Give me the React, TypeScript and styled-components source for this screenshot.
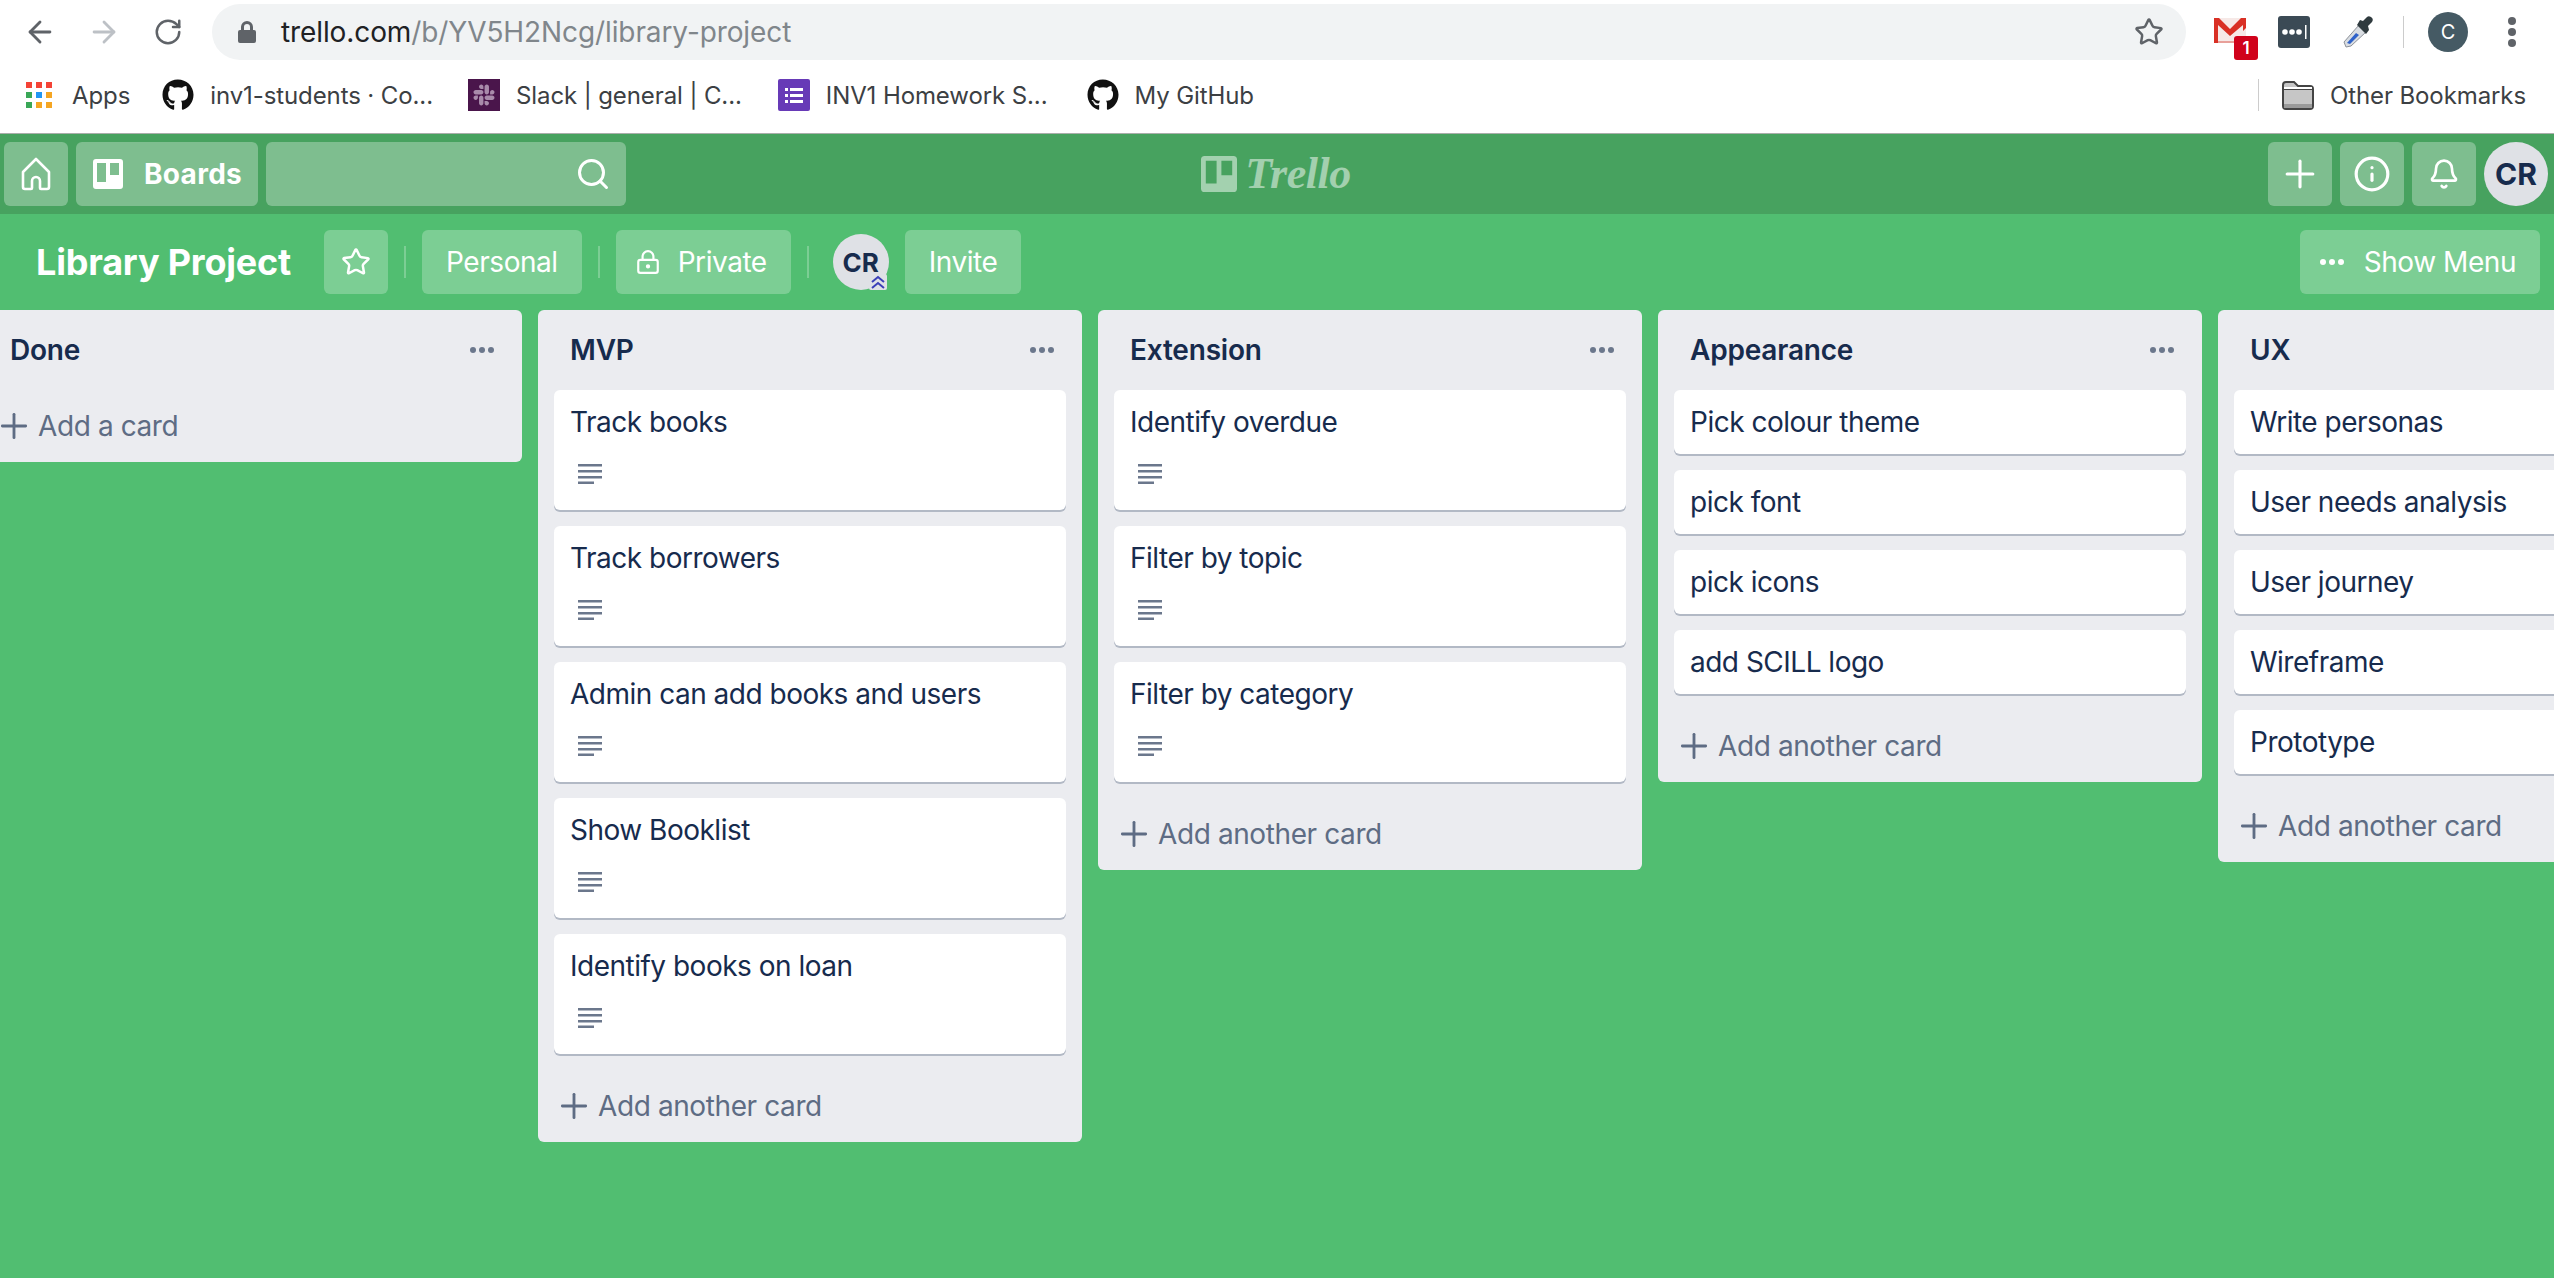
import React from 'react'
import styled, { createGlobalStyle } from 'styled-components'
import { ArrowLeft, ArrowRight, RotateCw, Star, Search, Plus, Info, Bell, LockKeyhole } from 'lucide-react'
import { FaGithub, FaSlack } from 'react-icons/fa'

const GlobalStyle = createGlobalStyle`
    html, body {
        margin: 0;
        padding: 0;
        background: #fff;
    }
    * {
        box-sizing: border-box;
    }
`

const Page = styled.div`
    width: 2554px;
    height: 1278px;
    overflow: hidden;
    display: flex;
    flex-direction: column;
    font-family: Inter, "Liberation Sans", sans-serif;
`

/* browser chrome */
const Toolbar = styled.div`
    height: 66px;
    padding: 4px 0 6px 8px;
    display: flex;
    align-items: center;
    background: #fff;
`
const NavButton = styled.div<{ $faded?: boolean }>`
    width: 64px;
    height: 56px;
    display: flex;
    align-items: center;
    justify-content: center;
    color: ${p => (p.$faded ? '#bdc1c6' : '#5f6368')};
`
const AddressBar = styled.div`
    width: 1974px;
    height: 56px;
    margin-left: 12px;
    padding: 0 22px 0 26px;
    border-radius: 28px;
    background: #f1f3f4;
    display: flex;
    align-items: center;
    color: #5f6368;
`
const Url = styled.div`
    flex: 1;
    margin-left: 25px;
    font-size: 28px;
    letter-spacing: -0.1px;
    color: #80868b;
    span {
        color: #202124;
    }
`
const ExtItem = styled.div<{ $ml: number; $w: number }>`
    position: relative;
    margin-left: ${p => p.$ml}px;
    width: ${p => p.$w}px;
    height: 44px;
    flex-shrink: 0;
    display: flex;
    align-items: center;
    justify-content: center;
`
const GmailBadge = styled.span`
    position: absolute;
    right: 0;
    bottom: -6px;
    width: 24px;
    height: 24px;
    border-radius: 3px;
    background: #d0021b;
    color: #fff;
    font-size: 17px;
    font-weight: 600;
    display: flex;
    align-items: center;
    justify-content: center;
`
const ExtDivider = styled.div`
    margin-left: 28px;
    width: 1px;
    height: 32px;
    background: #ccc;
`
const ProfileCircle = styled.div`
    margin-left: 24px;
    width: 40px;
    height: 40px;
    border-radius: 50%;
    background: #455a64;
    color: #fff;
    font-size: 20px;
    display: flex;
    align-items: center;
    justify-content: center;
`
const KebabDots = styled.div`
    margin-left: 40px;
    width: 8px;
    display: flex;
    flex-direction: column;
    gap: 3px;
    i {
        width: 8px;
        height: 8px;
        border-radius: 50%;
        background: #5f6368;
    }
`

const BookmarksBar = styled.div`
    height: 68px;
    padding: 0 28px 9px 26px;
    display: flex;
    align-items: center;
    background: #fff;
    border-bottom: 1px solid #a9aeaa;
    color: #3c4043;
    font-size: 24px;
    letter-spacing: -0.1px;
`
const Bookmark = styled.div<{ $ml?: number; $gap?: number }>`
    display: flex;
    align-items: center;
    margin-left: ${p => p.$ml ?? 0}px;
    gap: ${p => p.$gap ?? 16}px;
    white-space: nowrap;
`
const BookmarksEnd = styled.div`
    margin-left: auto;
    padding-left: 23px;
    height: 32px;
    border-left: 1px solid #ccc;
    display: flex;
    align-items: center;
    gap: 16px;
`
const SlackSquare = styled.div`
    width: 32px;
    height: 32px;
    background: #4a154b;
    color: #a98bab;
    display: flex;
    align-items: center;
    justify-content: center;
`

/* trello header */
const Header = styled.header`
    height: 80px;
    padding: 8px 6px 8px 4px;
    background: #47a25f;
    display: grid;
    grid-template-columns: 1fr auto 1fr;
    align-items: center;
`
const HeaderGroup = styled.div<{ $right?: boolean }>`
    display: flex;
    gap: 8px;
    justify-content: ${p => (p.$right ? 'flex-end' : 'flex-start')};
`
const HeaderButton = styled.div<{ $w?: number }>`
    width: ${p => p.$w ?? 64}px;
    height: 64px;
    border-radius: 6px;
    background: rgba(255, 255, 255, 0.3);
    color: #fff;
    display: flex;
    align-items: center;
    justify-content: center;
`
const BoardsButton = styled(HeaderButton)`
    justify-content: flex-start;
    padding-left: 17px;
    gap: 21px;
    font-size: 28px;
    font-weight: 700;
    letter-spacing: 0.3px;
`
const SearchBox = styled(HeaderButton)`
    justify-content: flex-end;
    padding-right: 15px;
`
const Logo = styled.div`
    display: flex;
    align-items: center;
    gap: 8px;
    color: rgba(255, 255, 255, 0.5);
`
const LogoWord = styled.span`
    font-family: "Liberation Serif", serif;
    font-style: italic;
    font-weight: 700;
    font-size: 44px;
    line-height: 1;
    letter-spacing: -0.5px;
`
const UserAvatar = styled.div<{ $size: number; $font: number }>`
    position: relative;
    width: ${p => p.$size}px;
    height: ${p => p.$size}px;
    border-radius: 50%;
    background: #dfe1e6;
    color: #172b4d;
    font-size: ${p => p.$font}px;
    font-weight: 700;
    flex-shrink: 0;
    display: flex;
    align-items: center;
    justify-content: center;
`
const AdminBadge = styled.span`
    position: absolute;
    right: 2px;
    bottom: 0;
    width: 18px;
    height: 16px;
    display: flex;
`

/* board bar */
const BoardBar = styled.div`
    height: 96px;
    padding: 16px 14px 16px 36px;
    background: #51be71;
    display: flex;
    align-items: center;
`
const BoardTitle = styled.h1`
    margin: 0 33px 0 0;
    color: #fff;
    font-size: 36px;
    font-weight: 700;
    letter-spacing: -0.2px;
    white-space: nowrap;
`
const BarButton = styled.div`
    height: 64px;
    padding: 0 24px;
    border-radius: 6px;
    background: rgba(255, 255, 255, 0.25);
    color: #fff;
    font-size: 28px;
    letter-spacing: -0.45px;
    display: flex;
    align-items: center;
    gap: 18px;
    white-space: nowrap;
`
const StarButton = styled(BarButton)`
    width: 64px;
    padding: 0;
    justify-content: center;
`
const PrivateButton = styled(BarButton)`
    padding-left: 19px;
    gap: 17px;
`
const BarDivider = styled.div`
    width: 2px;
    height: 32px;
    margin: 0 16px;
    background: rgba(255, 255, 255, 0.25);
`
const MembersDivider = styled(BarDivider)`
    margin-right: 24px;
`
const InviteButton = styled(BarButton)`
    margin-left: 16px;
`
const ShowMenu = styled(BarButton)`
    margin-left: auto;
    padding: 0 24px 0 20px;
    gap: 20px;
`
const WhiteDots = styled.div`
    width: 24px;
    display: flex;
    justify-content: space-between;
    i {
        width: 6px;
        height: 6px;
        border-radius: 50%;
        background: #fff;
    }
`

/* lists */
const Canvas = styled.main`
    flex: 1;
    background: #51be71;
    overflow: hidden;
    display: flex;
    align-items: flex-start;
    gap: 16px;
    margin-left: -22px;
`
const List = styled.section`
    width: 544px;
    flex-shrink: 0;
    padding: 0 16px;
    border-radius: 6px;
    background: #ebecf0;
`
const ListHeader = styled.div`
    height: 80px;
    padding: 0 16px;
    display: flex;
    align-items: center;
    justify-content: space-between;
`
const ListTitle = styled.h2`
    margin: 0;
    color: #172b4d;
    font-size: 28px;
    font-weight: 600;
    letter-spacing: -0.2px;
`
const GreyDots = styled.div`
    width: 24px;
    margin-right: -4px;
    display: flex;
    justify-content: space-between;
    i {
        width: 6px;
        height: 6px;
        border-radius: 50%;
        background: #6b778c;
    }
`
const CardBox = styled.article`
    margin-bottom: 16px;
    padding: 12px 16px;
    border-radius: 6px;
    background: #fff;
    box-shadow: 0 2px 0 rgba(9, 30, 66, 0.25);
    color: #172b4d;
    font-size: 28px;
    line-height: 40px;
    letter-spacing: -0.5px;
`
const CardBadges = styled.div`
    height: 56px;
    padding: 22px 0 0 8px;
`
const AddCard = styled.div`
    height: 72px;
    display: flex;
    align-items: center;
    gap: 4px;
    color: #5e6c84;
    font-size: 28px;
    letter-spacing: -0.4px;
`

const AppsGrid = () => {
    const colors = ['#f44336', '#f44336', '#f44336', '#3aa757', '#2196f3', '#f5a623', '#3aa757', '#f5a623', '#f5a623']
    return (
        <svg width="26" height="26" viewBox="0 0 26 26">
            {colors.map((c, i) => (
                <rect key={i} x={(i % 3) * 10} y={Math.floor(i / 3) * 10} width="6" height="6" fill={c} />
            ))}
        </svg>
    )
}

const FormsIcon = () => (
    <svg width="32" height="32" viewBox="0 0 32 32">
        <rect width="32" height="32" rx="2" fill="#673ab7" />
        <path d="M7 9h3v3H7zM12 9h13v3H12zM7 15h3v3H7zM12 15h13v3H12zM7 21h3v3H7zM12 21h13v3H12z" fill="#fff" />
    </svg>
)

const FolderIcon = () => (
    <svg width="32" height="30" viewBox="0 0 32 30">
        <path d="M1 5a3 3 0 0 1 3-3h8l4 4h12a3 3 0 0 1 3 3v17a3 3 0 0 1-3 3H4a3 3 0 0 1-3-3z" fill="#c6c6c6" stroke="#444" strokeWidth="2" />
        <path d="M1 9h30" stroke="#444" strokeWidth="2" />
        <path d="M2 9h28v-2H2z" fill="#fff" />
        <path d="M2 24h28v4H2z" fill="#9a9a9a" />
    </svg>
)

const GmailIcon = () => (
    <svg width="32" height="25" viewBox="0 0 32 25" style={{ position: 'absolute', left: 0, top: 8 }}>
        <rect width="32" height="25" fill="#f6e9e7" />
        <path d="M0 0h5l11 11L27 0h5v10l-3 3V7L16 18 4 7v18H0z" fill="#d93025" />
        <path d="M4 23h18v2H4z" fill="#e8a09a" />
    </svg>
)

const LastPassIcon = () => (
    <svg width="32" height="32" viewBox="0 0 32 32">
        <rect width="32" height="32" rx="3" fill="#3b4a55" />
        <circle cx="7" cy="16" r="2.8" fill="#fff" />
        <circle cx="14" cy="16" r="2.8" fill="#fff" />
        <circle cx="21" cy="16" r="2.8" fill="#fff" />
        <rect x="27" y="9" width="1.5" height="14" fill="#fff" />
    </svg>
)

const DropperIcon = () => (
    <svg width="32" height="32" viewBox="0 0 32 32">
        <path d="M3 31 1 26 16 9l7 7L8 30z" fill="#d9dde2" stroke="#8d9299" strokeWidth="1" />
        <path d="M4 27 13 17l3 2-9 9z" fill="#2f62c9" />
        <path d="M14 9l9 9 3-4-1-4 4-4q2-3-1-5t-5 1l-3 3-3-1z" fill="#2f3a3e" />
    </svg>
)

const HomeIcon = () => (
    <svg width="34" height="36" viewBox="0 0 34 36" fill="none" stroke="#fff" strokeWidth="2.6" strokeLinejoin="round">
        <path d="M17 3 4 16v15a2 2 0 0 0 2 2h6a1 1 0 0 0 1-1v-7a4 4 0 0 1 8 0v7a1 1 0 0 0 1 1h6a2 2 0 0 0 2-2V16z" />
    </svg>
)

const BoardMark = ({ size }: { size: number }) => (
    <svg width={size} height={size} viewBox="0 0 30 30">
        <path
            fillRule="evenodd"
            fill="currentColor"
            d="M3 0h24a3 3 0 0 1 3 3v24a3 3 0 0 1-3 3H3a3 3 0 0 1-3-3V3a3 3 0 0 1 3-3zM4 4v19h9V4zM17 4v12h9V4z"
        />
    </svg>
)

const DescriptionIcon = () => (
    <svg width="24" height="20" viewBox="0 0 24 20" style={{ display: 'block' }}>
        <path d="M0 0h24v2.5H0zM0 6h24v2.5H0zM0 12h24v2.5H0zM0 17.5h16V20H0z" fill="#6b778c" />
    </svg>
)

const AdminChevrons = () => (
    <svg width="18" height="16" viewBox="0 0 18 16">
        <rect width="18" height="16" rx="2" fill="#dfe1e6" />
        <path d="M3 8l6-5 6 5M3 14l6-5 6 5" fill="none" stroke="#3b3fb8" strokeWidth="2" />
    </svg>
)

type CardData = { title: string; description?: boolean }

const lists: { title: string; addLabel: string; cards: CardData[] }[] = [
    { title: 'Done', addLabel: 'Add a card', cards: [] },
    {
        title: 'MVP',
        addLabel: 'Add another card',
        cards: [
            { title: 'Track books', description: true },
            { title: 'Track borrowers', description: true },
            { title: 'Admin can add books and users', description: true },
            { title: 'Show Booklist', description: true },
            { title: 'Identify books on loan', description: true },
        ],
    },
    {
        title: 'Extension',
        addLabel: 'Add another card',
        cards: [
            { title: 'Identify overdue', description: true },
            { title: 'Filter by topic', description: true },
            { title: 'Filter by category', description: true },
        ],
    },
    {
        title: 'Appearance',
        addLabel: 'Add another card',
        cards: [{ title: 'Pick colour theme' }, { title: 'pick font' }, { title: 'pick icons' }, { title: 'add SCILL logo' }],
    },
    {
        title: 'UX',
        addLabel: 'Add another card',
        cards: [
            { title: 'Write personas' },
            { title: 'User needs analysis' },
            { title: 'User journey' },
            { title: 'Wireframe' },
            { title: 'Prototype' },
        ],
    },
]

export default function App() {
    return (
        <Page>
            <GlobalStyle />
            <Toolbar>
                <NavButton>
                    <ArrowLeft size={34} strokeWidth={2} />
                </NavButton>
                <NavButton $faded>
                    <ArrowRight size={34} strokeWidth={2} />
                </NavButton>
                <NavButton>
                    <RotateCw size={30} strokeWidth={2} />
                </NavButton>
                <AddressBar>
                    <svg width="18" height="22" viewBox="0 0 18 22">
                        <path d="M3 9V6a6 6 0 0 1 12 0v3h1a2 2 0 0 1 2 2v9a2 2 0 0 1-2 2H2a2 2 0 0 1-2-2v-9a2 2 0 0 1 2-2zm3 0h6V6a3 3 0 0 0-6 0z" fill="#5f6368" />
                    </svg>
                    <Url>
                        <span>trello.com</span>/b/YV5H2Ncg/library-project
                    </Url>
                    <Star size={30} strokeWidth={2} />
                </AddressBar>
                <ExtItem $ml={28} $w={44}>
                    <GmailIcon />
                    <GmailBadge>1</GmailBadge>
                </ExtItem>
                <ExtItem $ml={20} $w={32}>
                    <LastPassIcon />
                </ExtItem>
                <ExtItem $ml={33} $w={32}>
                    <DropperIcon />
                </ExtItem>
                <ExtDivider />
                <ProfileCircle>C</ProfileCircle>
                <KebabDots>
                    <i />
                    <i />
                    <i />
                </KebabDots>
            </Toolbar>
            <BookmarksBar>
                <Bookmark $gap={20}>
                    <AppsGrid />
                    Apps
                </Bookmark>
                <Bookmark $ml={32}>
                    <FaGithub size={32} color="#111" />
                    inv1-students · Co...
                </Bookmark>
                <Bookmark $ml={35}>
                    <SlackSquare>
                        <FaSlack size={24} />
                    </SlackSquare>
                    Slack | general | C...
                </Bookmark>
                <Bookmark $ml={36}>
                    <FormsIcon />
                    INV1 Homework S...
                </Bookmark>
                <Bookmark $ml={39}>
                    <FaGithub size={32} color="#111" />
                    My GitHub
                </Bookmark>
                <BookmarksEnd>
                    <FolderIcon />
                    Other Bookmarks
                </BookmarksEnd>
            </BookmarksBar>
            <Header>
                <HeaderGroup>
                    <HeaderButton>
                        <HomeIcon />
                    </HeaderButton>
                    <BoardsButton $w={182}>
                        <BoardMark size={30} />
                        Boards
                    </BoardsButton>
                    <SearchBox $w={360}>
                        <Search size={36} strokeWidth={2} />
                    </SearchBox>
                </HeaderGroup>
                <Logo>
                    <BoardMark size={36} />
                    <LogoWord>Trello</LogoWord>
                </Logo>
                <HeaderGroup $right>
                    <HeaderButton>
                        <Plus size={44} strokeWidth={1.7} />
                    </HeaderButton>
                    <HeaderButton>
                        <Info size={38} strokeWidth={2} />
                    </HeaderButton>
                    <HeaderButton>
                        <Bell size={32} strokeWidth={2} />
                    </HeaderButton>
                    <UserAvatar $size={64} $font={30}>
                        CR
                    </UserAvatar>
                </HeaderGroup>
            </Header>
            <BoardBar>
                <BoardTitle>Library Project</BoardTitle>
                <StarButton>
                    <Star size={30} strokeWidth={2} />
                </StarButton>
                <BarDivider />
                <BarButton>Personal</BarButton>
                <BarDivider />
                <PrivateButton>
                    <LockKeyhole size={26} strokeWidth={2} />
                    Private
                </PrivateButton>
                <MembersDivider />
                <UserAvatar $size={56} $font={26}>
                    CR
                    <AdminBadge>
                        <AdminChevrons />
                    </AdminBadge>
                </UserAvatar>
                <InviteButton>Invite</InviteButton>
                <ShowMenu>
                    <WhiteDots>
                        <i />
                        <i />
                        <i />
                    </WhiteDots>
                    Show Menu
                </ShowMenu>
            </BoardBar>
            <Canvas>
                {lists.map(list => (
                    <List key={list.title}>
                        <ListHeader>
                            <ListTitle>{list.title}</ListTitle>
                            <GreyDots>
                                <i />
                                <i />
                                <i />
                            </GreyDots>
                        </ListHeader>
                        {list.cards.map(card => (
                            <CardBox key={card.title}>
                                {card.title}
                                {card.description && (
                                    <CardBadges>
                                        <DescriptionIcon />
                                    </CardBadges>
                                )}
                            </CardBox>
                        ))}
                        <AddCard>
                            <Plus size={40} strokeWidth={1.7} />
                            {list.addLabel}
                        </AddCard>
                    </List>
                ))}
            </Canvas>
        </Page>
    )
}
